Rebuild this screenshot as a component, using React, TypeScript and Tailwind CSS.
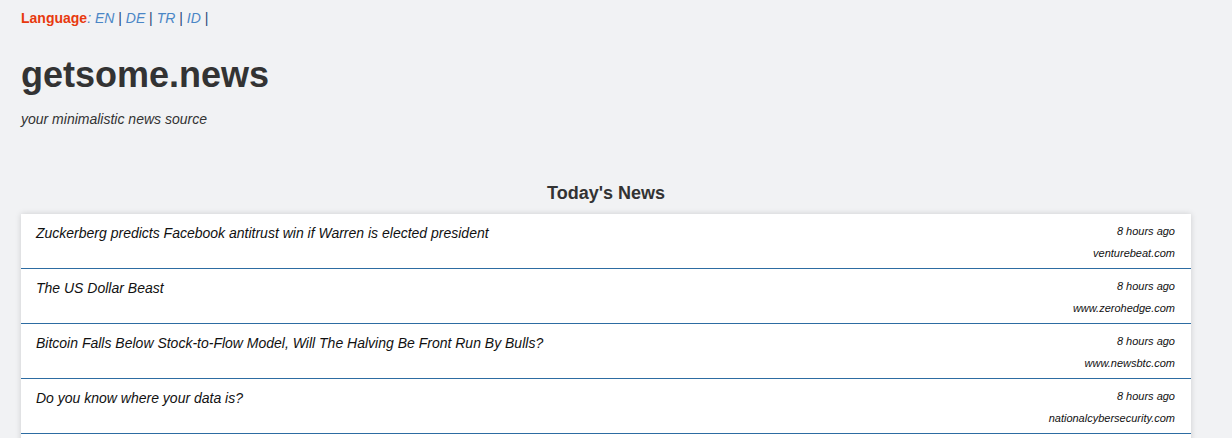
import React from "react";

const news = [
  { title: "Zuckerberg predicts Facebook antitrust win if Warren is elected president", time: "8 hours ago", domain: "venturebeat.com" },
  { title: "The US Dollar Beast", time: "8 hours ago", domain: "www.zerohedge.com" },
  { title: "Bitcoin Falls Below Stock-to-Flow Model, Will The Halving Be Front Run By Bulls?", time: "8 hours ago", domain: "www.newsbtc.com" },
  { title: "Do you know where your data is?", time: "8 hours ago", domain: "nationalcybersecurity.com" },
];

export default function App() {
  return (
    <div
      className="bg-[#f1f2f4] text-[#333] pl-[21px] pt-[8px] overflow-hidden h-[438px]"
      style={{ fontFamily: '"Liberation Sans", Arial, sans-serif' }}
    >
      <div className="text-[14px] leading-[20px] h-[20px]">
        <span className="font-bold text-[#e8390e]">Language</span>
        <span className="italic text-[#4a86c6]">: </span>
        <span className="italic text-[#4a86c6]">EN</span>
        <span className="text-[#2c4a7a]"> | </span>
        <span className="italic text-[#4a86c6]">DE</span>
        <span className="text-[#2c4a7a]"> | </span>
        <span className="italic text-[#4a86c6]">TR</span>
        <span className="text-[#2c4a7a]"> | </span>
        <span className="italic text-[#4a86c6]">ID</span>
        <span className="text-[#2c4a7a]"> |</span>
      </div>
      <h1 className="mt-[26px] text-[36px] leading-[41px] font-bold text-[#333]">getsome.news</h1>
      <p className="mt-[14px] text-[14px] leading-[20px] italic text-[#333]">your minimalistic news source</p>
      <h2 className="mt-[52px] w-[1170px] text-center text-[18px] leading-[24px] font-bold text-[#333]">Today's News</h2>
      <div className="mt-[9px] w-[1170px] bg-white pb-[20px] shadow-[0_0_6px_rgba(0,0,0,0.15)]">
        {news.map((n, i) => (
          <div key={i} className="flex justify-between border-b border-[#2d6ca2] h-[55px] pl-[15px] pr-[16px]">
            <div className="pt-[9px] text-[14px] leading-[20px] italic text-[#111]">{n.title}</div>
            <div className="pt-[6px] text-right text-[11px] leading-[22px] italic text-[#111]">
              <div>{n.time}</div>
              <div>{n.domain}</div>
            </div>
          </div>
        ))}
      </div>
    </div>
  );
}
